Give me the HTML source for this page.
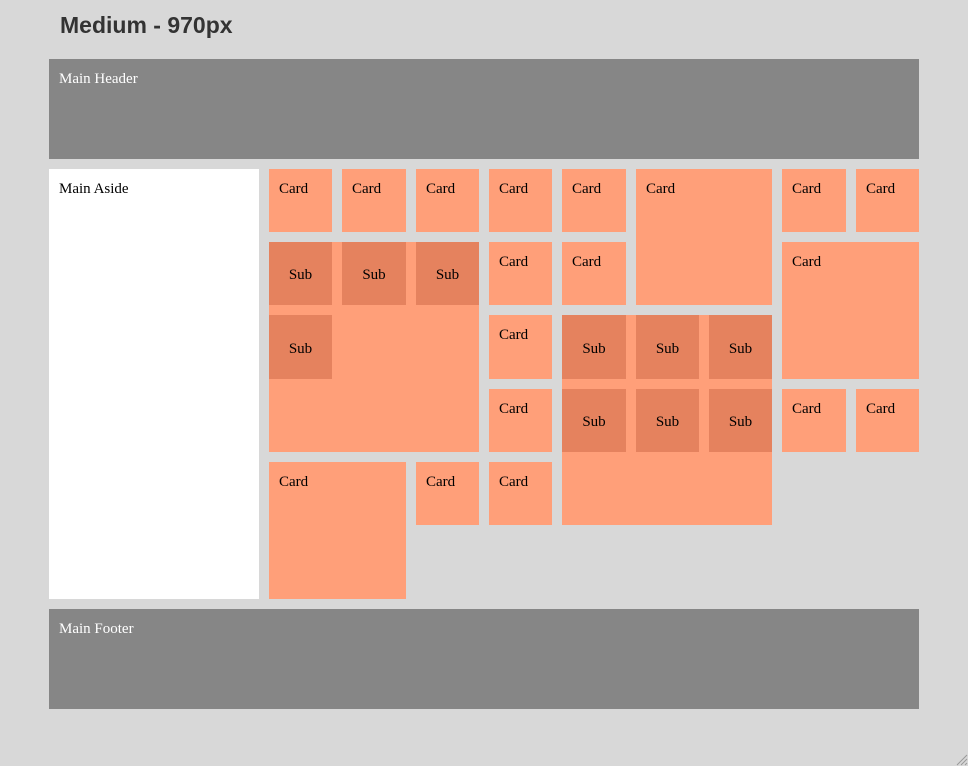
<!DOCTYPE html><html><head><style>
body{margin:0;width:968px;height:766px;background:#d8d8d8;position:relative;overflow:hidden;font-family:"Liberation Serif",serif;font-size:15px}
div{position:absolute;box-sizing:border-box}
.h{background:#868686;color:#fff;padding:12px 10px}
.c{background:#ff9f79;color:#000;padding:12px 10px}
.s{background:#e5825e;display:flex;align-items:center;justify-content:center;padding:4px 0 0 0}
h1{position:absolute;left:60px;top:12px;margin:0;font:bold 23px "Liberation Sans",sans-serif;color:#333}
</style></head><body>
<h1>Medium - 970px</h1>
<div class="h" style="left:49px;top:59px;width:870px;height:100px">Main Header</div>
<div style="left:49px;top:169px;width:210px;height:430px;background:#fff;padding:12px 10px">Main Aside</div>
<div class="h" style="left:49px;top:609px;width:870px;height:100px">Main Footer</div>

<div class="c" style="left:269px;top:169px;width:63px;height:63px">Card</div>
<div class="c" style="left:342px;top:169px;width:64px;height:63px">Card</div>
<div class="c" style="left:416px;top:169px;width:63px;height:63px">Card</div>
<div class="c" style="left:489px;top:169px;width:63px;height:63px">Card</div>
<div class="c" style="left:562px;top:169px;width:64px;height:63px">Card</div>
<div class="c" style="left:636px;top:169px;width:136px;height:136px">Card</div>
<div class="c" style="left:782px;top:169px;width:64px;height:63px">Card</div>
<div class="c" style="left:856px;top:169px;width:63px;height:63px">Card</div>

<div class="c" style="left:269px;top:242px;width:210px;height:210px"></div>
<div class="s" style="left:269px;top:242px;width:63px;height:63px">Sub</div>
<div class="s" style="left:342px;top:242px;width:64px;height:63px">Sub</div>
<div class="s" style="left:416px;top:242px;width:63px;height:63px">Sub</div>
<div class="s" style="left:269px;top:315px;width:63px;height:64px">Sub</div>

<div class="c" style="left:489px;top:242px;width:63px;height:63px">Card</div>
<div class="c" style="left:562px;top:242px;width:64px;height:63px">Card</div>
<div class="c" style="left:782px;top:242px;width:137px;height:137px">Card</div>

<div class="c" style="left:489px;top:315px;width:63px;height:64px">Card</div>
<div class="c" style="left:489px;top:389px;width:63px;height:63px">Card</div>

<div class="c" style="left:562px;top:315px;width:210px;height:210px"></div>
<div class="s" style="left:562px;top:315px;width:64px;height:64px">Sub</div>
<div class="s" style="left:636px;top:315px;width:63px;height:64px">Sub</div>
<div class="s" style="left:709px;top:315px;width:63px;height:64px">Sub</div>
<div class="s" style="left:562px;top:389px;width:64px;height:63px">Sub</div>
<div class="s" style="left:636px;top:389px;width:63px;height:63px">Sub</div>
<div class="s" style="left:709px;top:389px;width:63px;height:63px">Sub</div>

<div class="c" style="left:782px;top:389px;width:64px;height:63px">Card</div>
<div class="c" style="left:856px;top:389px;width:63px;height:63px">Card</div>

<div class="c" style="left:269px;top:462px;width:137px;height:137px">Card</div>
<div class="c" style="left:416px;top:462px;width:63px;height:63px">Card</div>
<div class="c" style="left:489px;top:462px;width:63px;height:63px">Card</div>

<svg style="position:absolute;left:954px;top:752px" width="14" height="14"><path d="M13 3L3 13M13 7L7 13M13 11L11 13" stroke="#999" stroke-width="1"/></svg>
</body></html>
